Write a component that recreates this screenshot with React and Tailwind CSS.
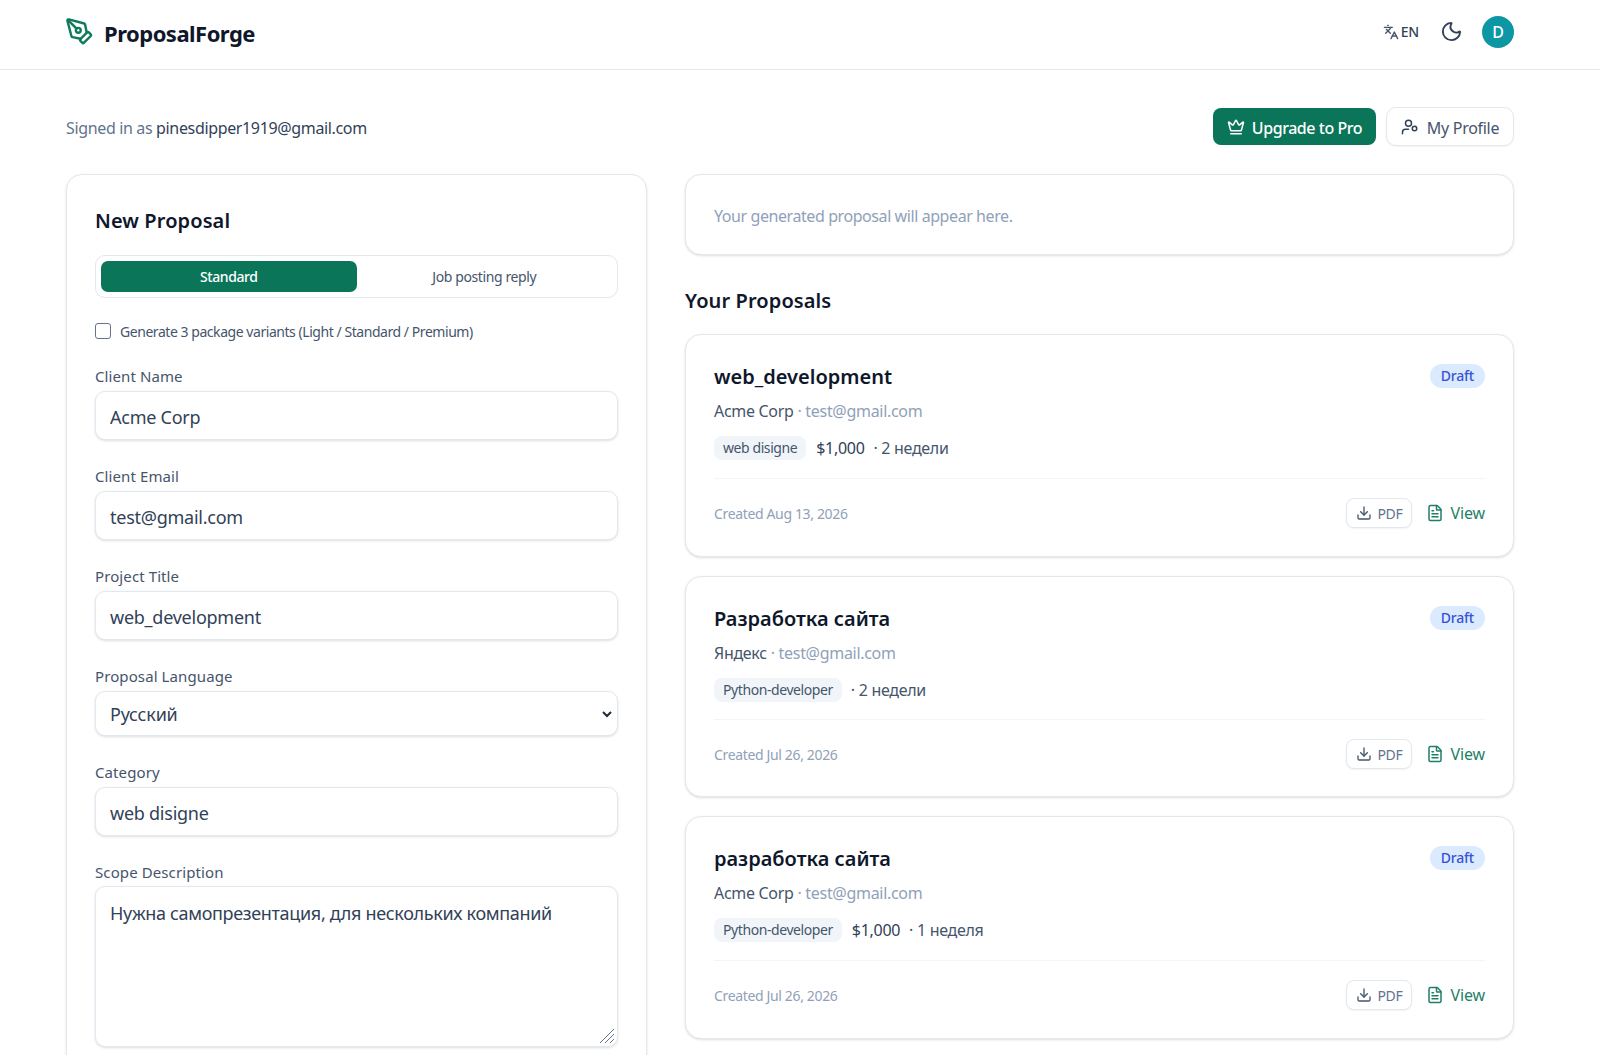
import React from "react";
import { PenTool, Languages, Moon, Crown, Download, FileText } from "lucide-react";

const F = "font-['Noto_Sans','Noto_Sans_CJK_SC',sans-serif]";

function Field({ label, value }) {
  return (
    <div className="mt-[26px]">
      <label className="block text-[15px] leading-[20px] tracking-[0.1px] text-slate-600">{label}</label>
      <input
        readOnly
        value={value}
        className="mt-[5px] block h-[49px] w-full rounded-[10px] border border-slate-200 bg-white px-[14px] pt-[2px] text-[18px] tracking-[-0.25px] text-slate-700 shadow-sm outline-none"
      />
    </div>
  );
}

function Proposal({ title, client, email, chip, price, time, date, h, rowH }) {
  return (
    <div className={`${h} flex flex-col rounded-[16px] border border-slate-200 bg-white px-[28px] pt-[28px] shadow-sm`}>
      <div className="flex items-start justify-between">
        <div className="text-[20px] leading-[28px] font-semibold text-slate-900">{title}</div>
        <span className="mt-[1px] rounded-full bg-blue-100 px-[11px] py-[2px] text-[14px] leading-[20px] font-medium tracking-[-0.2px] text-[#3553d6]">Draft</span>
      </div>
      <div className="mt-[8px] text-[16px] leading-[24px] tracking-[-0.3px] text-slate-600">
        {client} <span className="text-slate-400">· {email}</span>
      </div>
      <div className={`mt-[12px] flex ${rowH} items-center text-[16px] tracking-[-0.3px] text-slate-600`}>
        <span className="rounded-[8px] bg-slate-100 px-[9px] py-[2px] text-[14px] leading-[20px] tracking-[-0.42px] text-slate-600">{chip}</span>
        {price && <span className="ml-[10px] text-slate-700">{price}</span>}
        <span className="ml-[9px]">· {time}</span>
      </div>
      <div className="mt-[17px] border-t border-slate-100" />
      <div className="mt-[19px] flex items-center justify-between">
        <span className="text-[14px] tracking-[-0.35px] text-slate-400">Created {date}</span>
        <div className="flex items-center gap-[14px]">
          <button className="flex h-[30px] items-center gap-[5px] rounded-[8px] border border-slate-200 bg-white px-[9px] text-[14px] tracking-[-0.35px] text-slate-500 shadow-xs">
            <Download size={16} className="text-slate-600" />
            PDF
          </button>
          <button className="flex items-center gap-[6px] text-[16px] tracking-[-0.1px] text-[#1f7f66]">
            <FileText size={18} />
            View
          </button>
        </div>
      </div>
    </div>
  );
}

export default function App() {
  return (
    <div className={`${F} h-[1055px] overflow-hidden bg-white`}>
      <header className="flex h-[70px] items-center justify-between border-b border-slate-200 pr-[86px] pl-[65px]">
        <div className="flex items-center gap-[10px]">
          <PenTool size={29} className="-mt-[7px] text-[#0f7a5c]" />
          <span className="-mt-[2px] text-[22px] font-bold tracking-[-0.52px] text-slate-900">ProposalForge</span>
        </div>
        <div className="-mt-[6px] flex items-center">
          <div className="flex items-center gap-[2px] text-[14px] font-medium tracking-[-0.2px] text-slate-700">
            <Languages size={16} className="text-slate-600" />
            EN
          </div>
          <Moon size={23} className="ml-[21px] text-slate-700" />
          <div className="ml-[19px] flex h-[32px] w-[32px] items-center justify-center rounded-full bg-[#0d97a5] text-[16px] font-medium text-white">D</div>
        </div>
      </header>
      <main className="pt-[37px] pr-[86px] pl-[66px]">
        <div className="flex h-[39px] items-center justify-between">
          <div className="pt-[2px] text-[16px] tracking-[-0.35px] text-slate-500">
            Signed in as <span className="text-slate-700">pinesdipper1919@gmail.com</span>
          </div>
          <div className="flex items-center gap-[10px]">
            <button className="flex h-[37px] w-[163px] items-center justify-center gap-[7px] rounded-[8px] bg-[#0a7558] pt-[2px] text-[16px] font-medium tracking-[-0.45px] text-white">
              <Crown size={18} className="-mt-[2px]" />
              Upgrade to Pro
            </button>
            <button className="flex h-[39px] w-[128px] items-center justify-center gap-[8px] rounded-[10px] border border-slate-200 bg-white pt-[2px] text-[16px] tracking-[-0.3px] text-slate-600 shadow-xs">
              <svg viewBox="0 0 24 24" className="-mt-[2px] h-[18px] w-[18px] fill-none stroke-slate-700 stroke-2" strokeLinecap="round" strokeLinejoin="round">
                <circle cx="10" cy="7" r="4" />
                <path d="M10 15H6a4 4 0 0 0-4 4v2" />
                <circle cx="18" cy="14" r="3" />
              </svg>
              My Profile
            </button>
          </div>
        </div>
        <div className="mt-[28px] grid grid-cols-[581px_1fr] gap-[38px]">
          <section className="h-[1000px] rounded-[16px] border border-slate-200 bg-white px-[28px] pt-[32px] shadow-sm">
            <h2 className="text-[20px] leading-[28px] font-semibold tracking-[0.1px] text-slate-900">New Proposal</h2>
            <div className="mt-[20px] flex h-[43px] rounded-[10px] border border-slate-200 bg-white p-[5px]">
              <div className="flex flex-1 items-center justify-center rounded-[7px] bg-[#0a7558] text-[14px] font-medium tracking-[-0.4px] text-white">Standard</div>
              <div className="flex flex-1 items-center justify-center text-[14px] tracking-[-0.4px] text-slate-600">Job posting reply</div>
            </div>
            <label className="mt-[24px] flex h-[18px] items-center gap-[9px] text-[14px] tracking-[-0.45px] text-slate-600">
              <span className="h-[16px] w-[16px] rounded-[3px] border border-slate-500 bg-white" />
              Generate 3 package variants (Light / Standard / Premium)
            </label>
            <Field label="Client Name" value="Acme Corp" />
            <Field label="Client Email" value="test@gmail.com" />
            <Field label="Project Title" value="web_development" />
            <div className="mt-[26px]">
              <label className="block text-[15px] leading-[20px] tracking-[0.1px] text-slate-600">Proposal Language</label>
              <div className="relative mt-[5px]">
                <select className="block h-[45px] w-full appearance-none rounded-[10px] border border-slate-200 bg-white px-[14px] pt-[1px] text-[18px] tracking-[-0.2px] text-slate-700 shadow-sm outline-none">
                  <option>Русский</option>
                </select>
                <svg viewBox="0 0 24 24" className="pointer-events-none absolute top-[15px] right-[3px] h-[16px] w-[16px] fill-none stroke-slate-800 stroke-[3]"><path d="m6 9 6 6 6-6" /></svg>
              </div>
            </div>
            <Field label="Category" value="web disigne" />
            <div className="mt-[26px]">
              <label className="block text-[15px] leading-[20px] tracking-[0.1px] text-slate-600">Scope Description</label>
              <div className="relative mt-[4px]">
                <textarea
                  readOnly
                  value="Нужна самопрезентация, для нескольких компаний"
                  className="block h-[161px] w-full resize-none rounded-[10px] border border-slate-200 bg-white px-[14px] py-[12px] text-[18px] leading-[28px] tracking-[-0.33px] text-slate-700 shadow-sm outline-none"
                />
                <svg viewBox="0 0 16 16" className="pointer-events-none absolute right-[3px] bottom-[3px] h-[16px] w-[16px] fill-none stroke-slate-500">
                  <path d="M1 15 15 1M6 15 15 6M11 15l4-4" />
                </svg>
              </div>
            </div>
          </section>
          <section>
            <div className="flex h-[81px] items-center rounded-[16px] border border-slate-200 bg-white px-[28px] pt-[3px] text-[16px] tracking-[-0.42px] text-slate-400 shadow-sm">
              Your generated proposal will appear here.
            </div>
            <h2 className="mt-[32px] text-[20px] leading-[28px] font-semibold tracking-[0.1px] text-slate-900">Your Proposals</h2>
            <div className="mt-[19px] flex flex-col gap-[19px]">
              <Proposal h="h-[223px]" rowH="h-[26px]" title="web_development" client="Acme Corp" email="test@gmail.com" chip="web disigne" price="$1,000" time="2 недели" date="Aug 13, 2026" />
              <Proposal h="h-[221px]" rowH="h-[25px]" title="Разработка сайта" client="Яндекс" email="test@gmail.com" chip="Python-developer" time="2 недели" date="Jul 26, 2026" />
              <Proposal h="h-[223px]" rowH="h-[26px]" title="разработка сайта" client="Acme Corp" email="test@gmail.com" chip="Python-developer" price="$1,000" time="1 неделя" date="Jul 26, 2026" />
            </div>
          </section>
        </div>
      </main>
    </div>
  );
}
